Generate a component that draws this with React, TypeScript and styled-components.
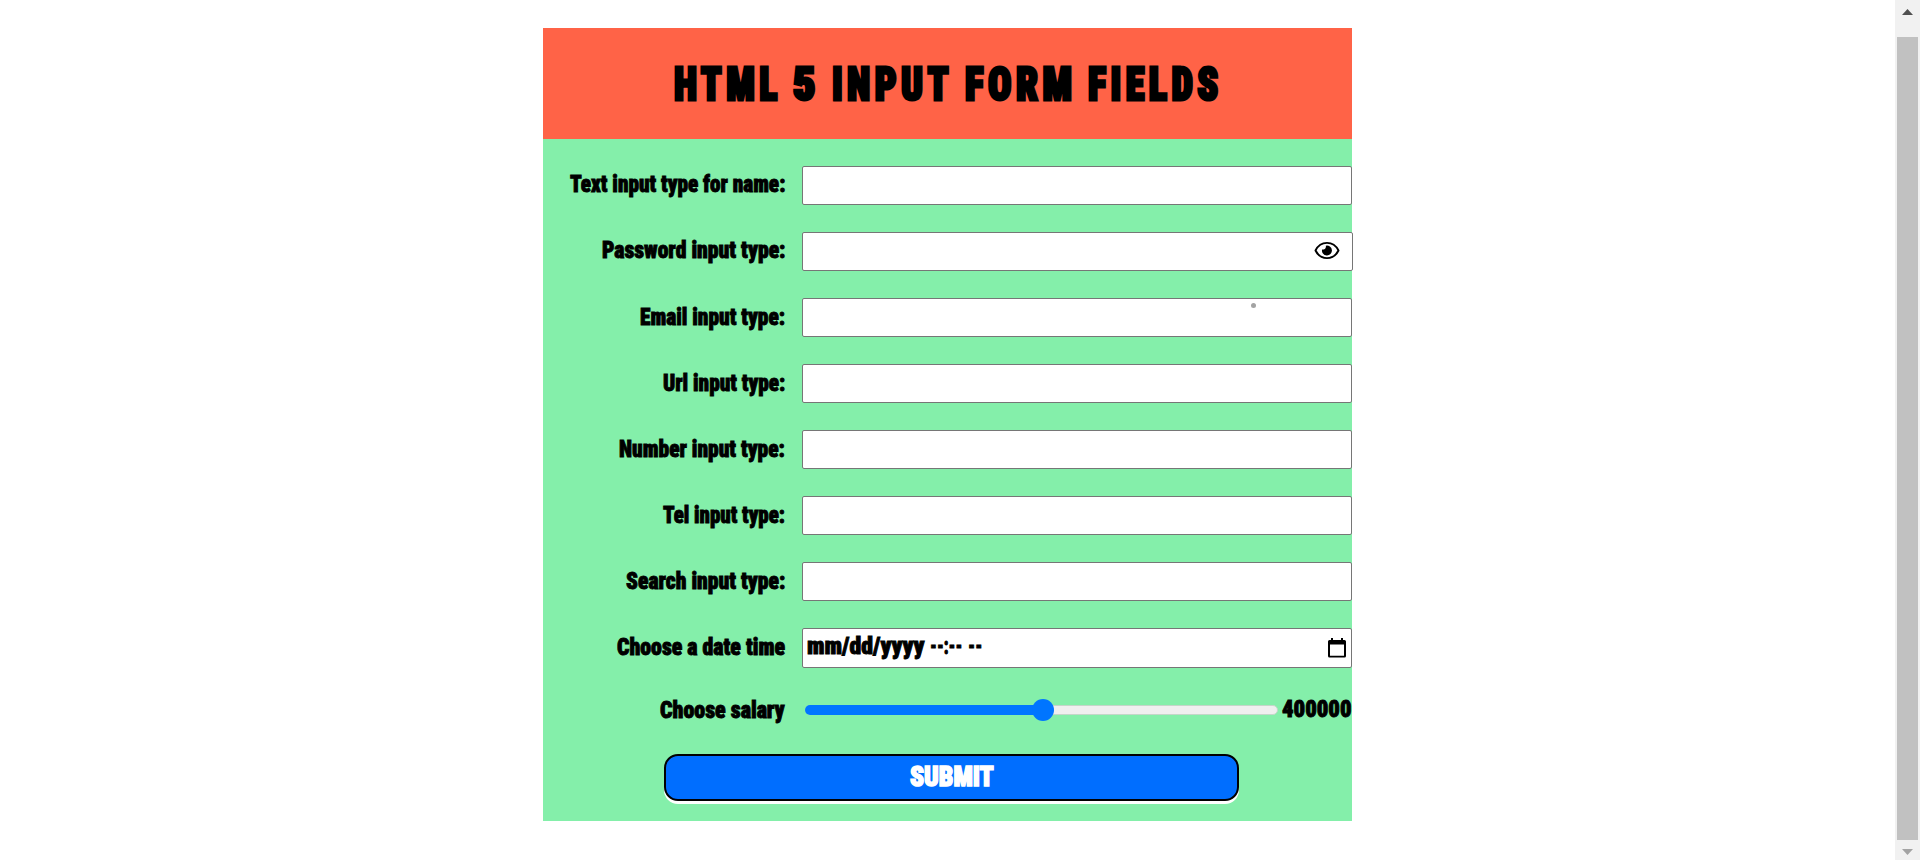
import React, { useLayoutEffect, useRef } from "react";
import styled, { createGlobalStyle } from "styled-components";

const GlobalStyle = createGlobalStyle`
  * { box-sizing: border-box; }
  body { margin: 0; background: #fff; overflow: hidden; }
`;

const Page = styled.div`
  display: flex;
  height: 860px;
  font-family: Roboto, "Open Sans", sans-serif;
  font-stretch: condensed;
  font-weight: 900;
  color: #000;
`;

const Content = styled.main`
  flex: 1;
  display: flex;
  justify-content: center;
  align-items: flex-start;
  padding: 28px 0 0;
`;

const Card = styled.section`
  width: 809px;
  height: 793px;
  background: #84efaa;
`;

const Header = styled.h1`
  margin: 0;
  height: 111px;
  display: flex;
  align-items: center;
  padding-left: 131px;
  gap: 16px;
  background: #ff6347;
  font-size: 47px;
  line-height: 60px;
  font-weight: 900;
`;

const Form = styled.form`
  padding-top: 27px;
`;

const Row = styled.div<{ $height?: number; $gap?: number }>`
  display: grid;
  grid-template-columns: 242px 550px;
  column-gap: 17px;
  align-items: center;
  height: ${(p) => p.$height ?? 39}px;
  margin-bottom: ${(p) => p.$gap ?? 27}px;
`;

const Label = styled.label<{ $lift?: boolean }>`
  display: flex;
  justify-content: flex-end;
  font-size: 23px;
  line-height: 30px;
  padding-bottom: ${(p) => (p.$lift ? 2 : 0)}px;
`;

const Field = styled.div<{ $width?: number }>`
  position: relative;
  display: flex;
  align-items: center;
  width: ${(p) => p.$width ?? 550}px;
  height: 100%;
  padding-left: 4px;
  border: 1px solid #767676;
  border-radius: 2px;
  background: #fff;
  font-size: 23px;
  line-height: 30px;
`;

const TextInput = styled.input`
  flex: 1;
  min-width: 0;
  height: 100%;
  padding: 0;
  border: 0;
  outline: 0;
  background: transparent;
  font: inherit;
`;

const FieldIcon = styled.svg<{ $right: number; $top: number }>`
  position: absolute;
  right: ${(p) => p.$right}px;
  top: ${(p) => p.$top}px;
`;

const Speck = styled.i`
  position: absolute;
  right: 95px;
  top: 4px;
  width: 5px;
  height: 5px;
  border-radius: 50%;
  background: #a3a3a3;
`;

const DateParts = styled.div`
  display: flex;
  gap: 6px;
  padding-bottom: 2px;
`;

const Range = styled.div`
  display: flex;
  align-items: center;
  padding: 0 0 1px 3px;
  font-size: 23px;
  line-height: 30px;
`;

const Track = styled.div`
  position: relative;
  width: 475px;
  height: 10px;
  margin-right: 4px;
  border: 1px solid #c4d6c9;
  border-radius: 5px;
  background: #efefef;
`;

const Progress = styled.div`
  width: 238px;
  height: 10px;
  margin: -1px;
  border-radius: 5px 0 0 5px;
  background: #0075ff;
`;

const Thumb = styled.div`
  position: absolute;
  left: 226px;
  top: -7px;
  width: 22px;
  height: 22px;
  border-radius: 50%;
  background: #0075ff;
`;

const Submit = styled.button`
  display: flex;
  align-items: center;
  justify-content: center;
  width: 575px;
  height: 47px;
  margin-left: 121px;
  padding: 0 0 2px;
  border: 2px solid #000;
  border-radius: 14px;
  background: #006eff;
  box-shadow: 0 3px 0 #fff;
  color: #fff;
  font: inherit;
  font-size: 28px;
  line-height: 36px;
`;

const Scrollbar = styled.aside`
  width: 25px;
  display: flex;
  flex-direction: column;
  align-items: center;
  background: #f1f1f1;
`;

const ScrollThumb = styled.div`
  width: 21px;
  height: 803px;
  background: #c1c1c1;
`;

const Arrow = styled.svg`
  display: block;
`;

const FitBox = styled.span<{ $width: number }>`
  display: block;
  flex: none;
  width: ${(p) => p.$width}px;
  white-space: pre;
`;

const FitInner = styled.span<{ $stroke: number; $spacing: number }>`
  display: inline-block;
  transform-origin: 0 50%;
  letter-spacing: ${(p) => p.$spacing}px;
  margin-right: ${(p) => -p.$spacing}px;
  -webkit-text-stroke: ${(p) => p.$stroke}px currentColor;
`;

type FitProps = { width: number; stroke?: number; spacing?: number; children: string };

/* Condenses a run of text so that it spans exactly the given width. */
function Fit({ width, stroke = 0.9, spacing = 0, children }: FitProps) {
  const ref = useRef<HTMLSpanElement>(null);
  useLayoutEffect(() => {
    const el = ref.current;
    if (el) el.style.transform = `scaleX(${width / (el.offsetWidth - spacing)})`;
  }, [width, spacing, children]);
  return (
    <FitBox $width={width}>
      <FitInner ref={ref} $stroke={stroke} $spacing={spacing}>{children}</FitInner>
    </FitBox>
  );
}

const title: [string, number][] = [["HTML", 103], ["5", 23], ["INPUT", 117], ["FORM", 107], ["FIELDS", 130]];

const fields = [
  { id: "name", label: "Text input type for name:", width: 215, type: "text" },
  { id: "password", label: "Password input type:", width: 183, type: "password" },
  { id: "email", label: "Email input type:", width: 145, type: "email" },
  { id: "url", label: "Url input type:", width: 122, type: "url" },
  { id: "number", label: "Number input type:", width: 166, type: "text" },
  { id: "tel", label: "Tel input type:", width: 122, type: "tel" },
  { id: "search", label: "Search input type:", width: 159, type: "text" },
];

export default function App() {
  return (
    <Page>
      <GlobalStyle />
      <Content>
        <Card>
          <Header>
            {title.map(([word, width]) => (
              <Fit key={word} width={width} stroke={3.2} spacing={5.5}>{word}</Fit>
            ))}
          </Header>
          <Form>
            {fields.map((f, i) => (
              <Row key={f.id}>
                <Label htmlFor={f.id} $lift={i < 2}><Fit width={f.width}>{f.label}</Fit></Label>
                <Field $width={f.id === "password" ? 551 : 550}>
                  <TextInput id={f.id} type={f.type} />
                  {f.id === "password" && (
                    <FieldIcon $right={12} $top={8} width="26" height="19" viewBox="0 0 26 19">
                      <path d="M1.500 9.500C4 4.500 8 1.900 13 1.900s9 2.600 11.500 7.600C22 14.500 18 17.100 13 17.100S4 14.500 1.500 9.500Z" fill="none" stroke="#000" strokeWidth="1.900" strokeLinejoin="round" />
                      <path d="M11.800 4.700a5 5 0 1 1-3.700 3.700c1 .5 2.500.1 3.200-.9.600-.8.800-1.900.5-2.800Z" />
                    </FieldIcon>
                  )}
                  {f.id === "email" && <Speck />}
                </Field>
              </Row>
            ))}
            <Row $height={40} $gap={27}>
              <Label><Fit width={168}>Choose a date time</Fit></Label>
              <Field>
                <DateParts>
                  <Fit width={117}>mm/dd/yyyy</Fit>
                  <Fit width={32}>--:--</Fit>
                  <Fit width={14}>--</Fit>
                </DateParts>
                <FieldIcon $right={5} $top={9} width="18" height="20" viewBox="0 0 18 20">
                  <path fillRule="evenodd" d="M3 0h2v2h8V0h2v2h1.500a1.500 1.500 0 0 1 1.500 1.500v14.500a1.500 1.500 0 0 1-1.500 1.500h-15A1.500 1.500 0 0 1 0 18v-14.500A1.500 1.500 0 0 1 1.500 2H3ZM2 6.500v11.300h14V6.500Z" />
                </FieldIcon>
              </Field>
            </Row>
            <Row $height={31} $gap={28}>
              <Label><Fit width={125}>Choose salary</Fit></Label>
              <Range>
                <Track><Progress /><Thumb /></Track>
                <Fit width={70}>400000</Fit>
              </Range>
            </Row>
            <Submit type="button"><Fit width={84} stroke={1.6}>SUBMIT</Fit></Submit>
          </Form>
        </Card>
      </Content>
      <Scrollbar>
        <Arrow width="25" height="37"><path d="M7 15h11L12.500 9Z" fill="#505050" /></Arrow>
        <ScrollThumb />
        <Arrow width="25" height="20"><path d="M7 9h11l-5.500 6Z" fill="#a3a3a3" /></Arrow>
      </Scrollbar>
    </Page>
  );
}
